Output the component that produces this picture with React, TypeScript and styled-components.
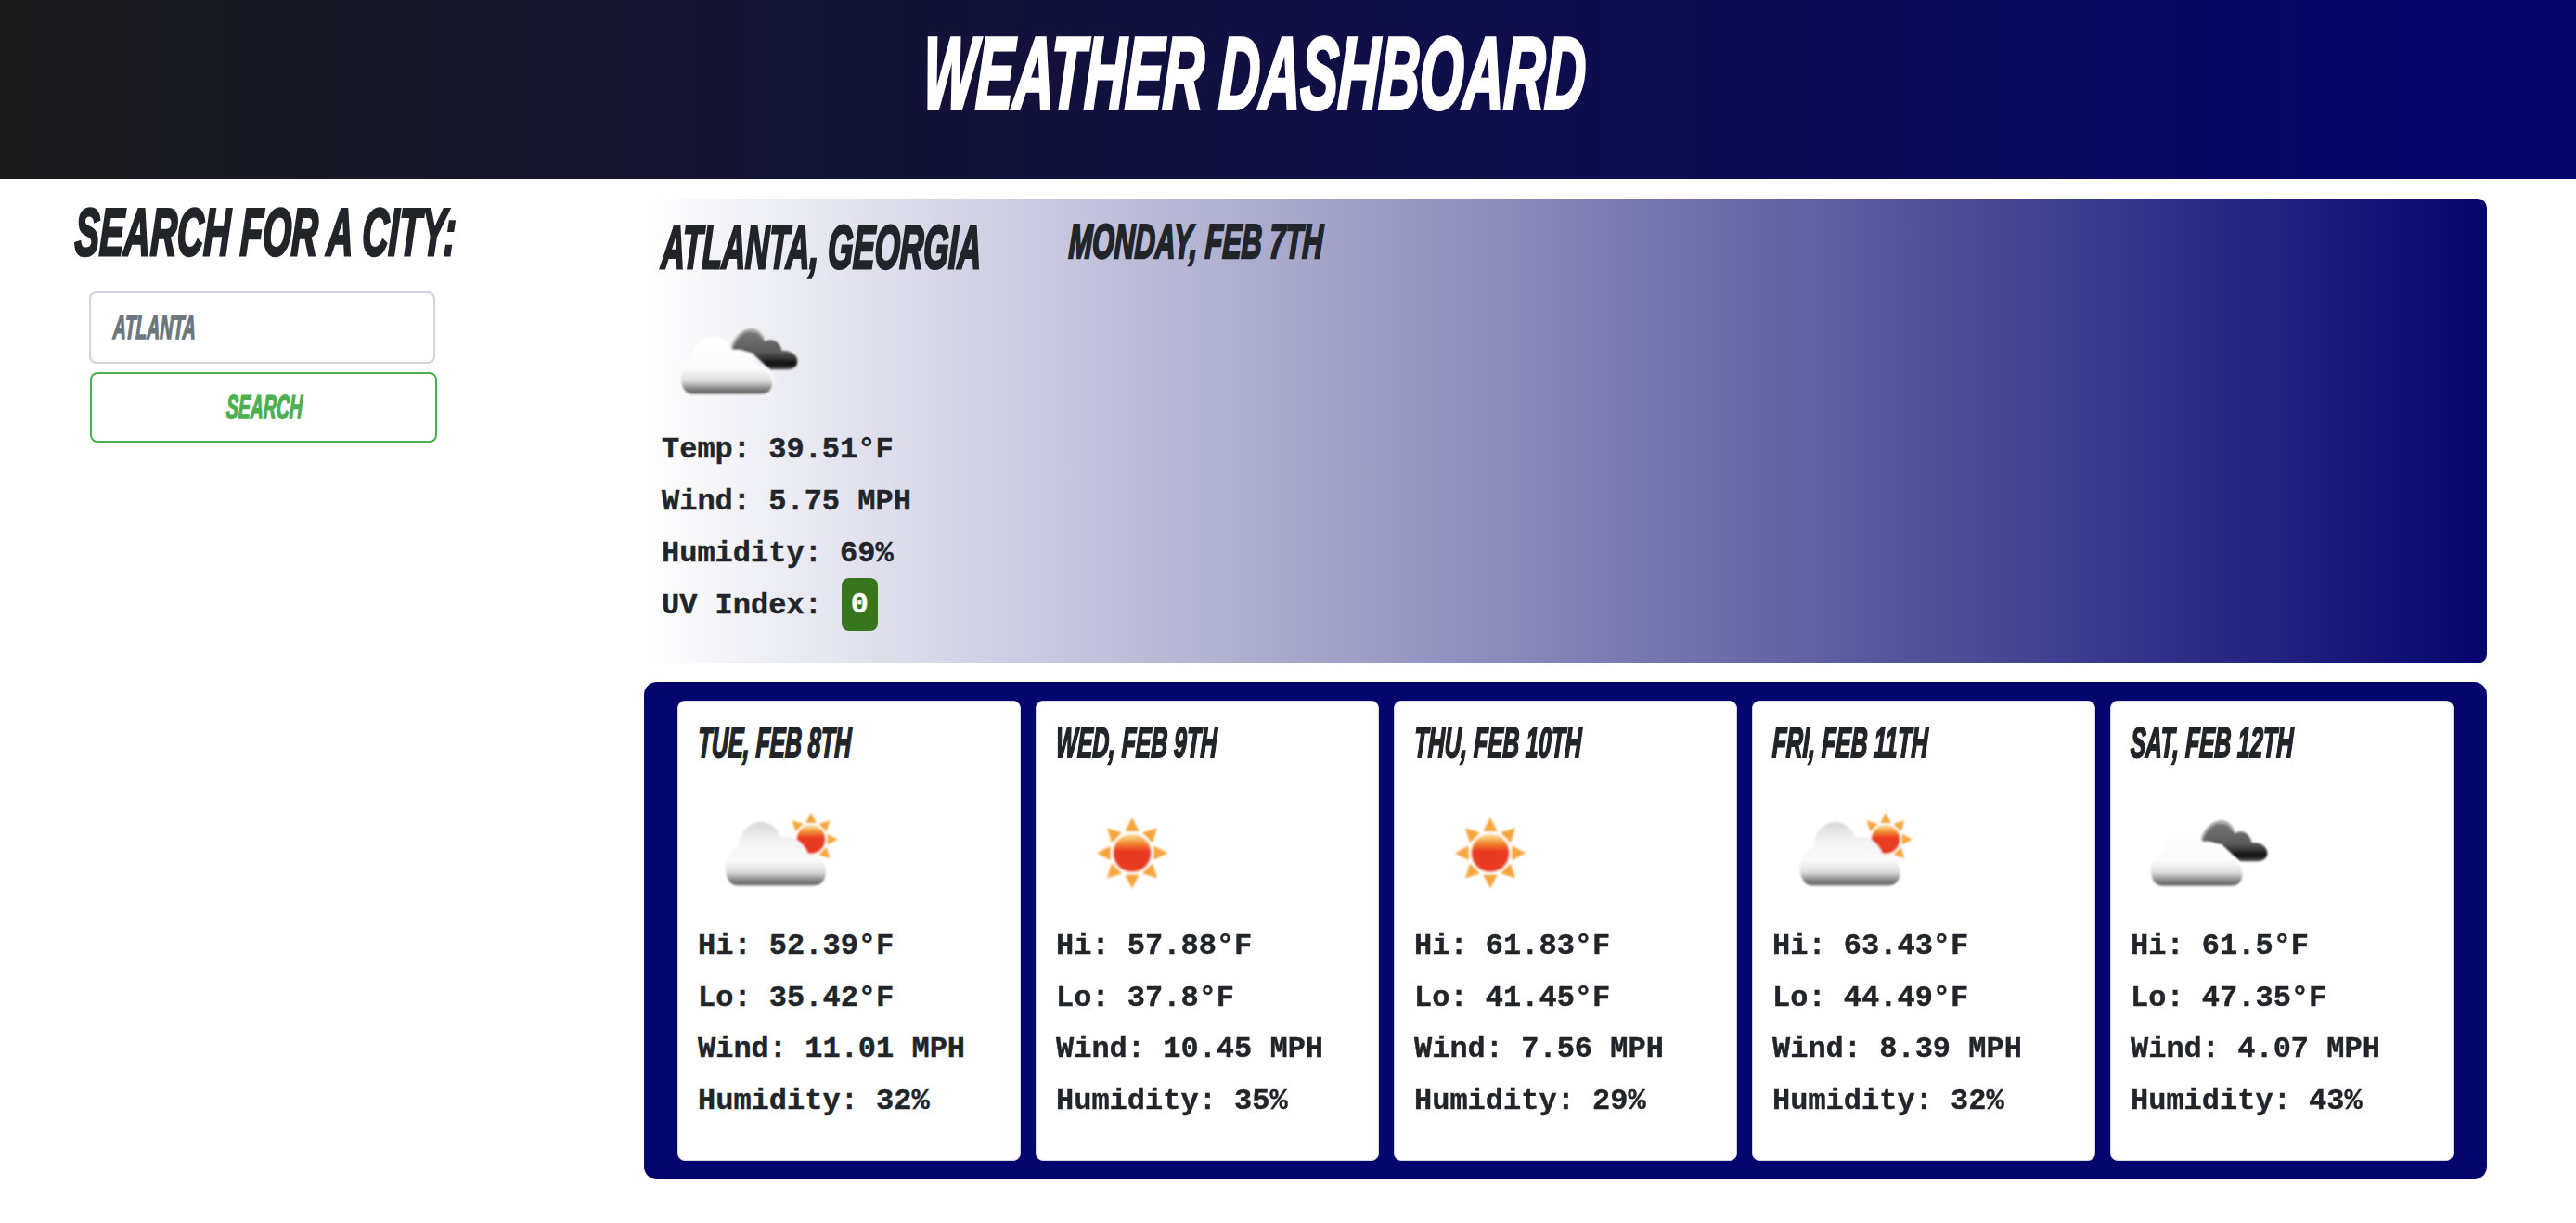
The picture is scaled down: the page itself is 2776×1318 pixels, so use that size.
import React, { FC } from "react";
import styled, { createGlobalStyle, css } from "styled-components";

const GlobalStyle = createGlobalStyle`
  html, body {
    margin: 0;
    padding: 0;
    background: #ffffff;
  }
`;

const bangers = css`
  font-family: "Liberation Sans Narrow", "Liberation Sans", sans-serif;
  font-weight: 700;
  font-style: italic;
  text-transform: uppercase;
  white-space: nowrap;
`;

const Page = styled("div")`
  width: 2776px;
  height: 1318px;
  overflow: hidden;
  color: #212529;
`;

const Header = styled("header")`
  height: 193px;
  background: linear-gradient(to right, #1a1a1a, #05056e);
  display: flex;
  justify-content: center;
  padding-top: 24px;
  box-sizing: border-box;
`;

// Bangers isn't installed, so a narrow bold gets squeezed down to its width
const Squeezed = styled("span")<{ $x: number; $stroke?: number }>`
  display: inline-block;
  transform: scaleX(${(p) => p.$x}) skewX(-4deg);
  transform-origin: left center;
  -webkit-text-stroke: ${(p) => p.$stroke ?? 1}px currentColor;
`;

const Title = styled("h1")`
  ${bangers}
  margin: 0;
  width: 786px;
  font-size: 110px;
  line-height: 110px;
  height: 110px;
  color: #ffffff;
`;

const Main = styled("main")`
  display: grid;
  grid-template-columns: 694px 1986px;
  padding-top: 21px;
`;

const Sidebar = styled("aside")`
  display: flex;
  flex-direction: column;
`;

const SearchTitle = styled("h2")`
  ${bangers}
  margin: 0 0 0 81px;
  height: 100px;
  font-size: 72px;
  line-height: 72px;
`;

const SearchInput = styled("div")`
  ${bangers}
  margin-left: 96px;
  width: 373px;
  height: 78px;
  box-sizing: border-box;
  border: 2px solid #ced4da;
  border-radius: 8px;
  padding-left: 24px;
  display: flex;
  align-items: center;
  font-size: 36px;
  color: #6c757d;
`;

const SearchButton = styled("button")`
  ${bangers}
  margin: 9px 0 0 97px;
  width: 374px;
  height: 76px;
  box-sizing: border-box;
  border: 2px solid #4caf50;
  border-radius: 8px;
  background: #ffffff;
  padding: 0 0 0 145px;
  text-align: left;
  font-size: 36px;
  color: #4caf50;
`;

const Content = styled("section")`
  display: flex;
  flex-direction: column;
  gap: 20px;
`;

const Hero = styled("div")`
  height: 501px;
  box-sizing: border-box;
  border-radius: 10px;
  padding: 20px 0 0 19px;
  background: linear-gradient(to right, #ffffff, #05056e);
`;

const HeroHead = styled("div")`
  display: flex;
  height: 96px;
`;

const City = styled("h2")`
  ${bangers}
  margin: 0;
  width: 439px;
  font-size: 66px;
  line-height: 64px;
`;

const Today = styled("h3")`
  ${bangers}
  margin: 0;
  font-size: 52px;
  line-height: 52px;
`;

const IconBox = styled("svg")<{ $left: number }>`
  display: block;
  width: 160px;
  height: 110px;
  margin-left: ${(p) => p.$left}px;
`;

const Stats = styled("div")<{ $top: number; $pitch: number }>`
  margin-top: ${(p) => p.$top}px;
  font-family: "Liberation Mono", "Courier New", monospace;
  font-weight: 700;
  font-size: 32px;
  white-space: pre;
  -webkit-text-stroke: 0.4px currentColor;

  & > div {
    height: ${(p) => p.$pitch}px;
    line-height: ${(p) => p.$pitch}px;
  }
`;

const UvRow = styled("div")`
  display: flex;
  align-items: flex-start;
  margin-top: -2px;
`;

const UvLabel = styled("span")`
  padding-top: 2px;
`;

const UvBadge = styled("span")`
  margin-left: 21px;
  width: 39px;
  height: 57px;
  border-radius: 8px;
  background: #38761d;
  color: #ffffff;
  text-align: center;
  line-height: 57px;
`;

const Forecast = styled("div")`
  height: 536px;
  box-sizing: border-box;
  border-radius: 14px;
  padding: 20px 35px 0 36px;
  background: #05056e;
  display: grid;
  grid-template-columns: repeat(5, 370px);
  gap: 16px;
  align-items: start;
`;

const Card = styled("article")`
  height: 496px;
  box-sizing: border-box;
  background: #ffffff;
  border: 1px solid #d5d5dc;
  border-radius: 8px;
  padding: 19px 0 0 21px;
`;

const CardDate = styled("h4")`
  ${bangers}
  margin: 0 0 35px;
  height: 50px;
  font-size: 46px;
  line-height: 50px;
`;

const WHITE_CLOUD =
  "M75 272C50 268 38 245 40 215C42 190 60 175 78 170C82 130 110 105 145 105C175 105 195 125 205 145C235 140 265 150 285 190C320 190 338 215 335 240C332 262 315 272 295 272Z";

const RAYS = [0, 45, 90, 135, 180, 225, 270, 315];

const Gradients: FC = () => (
  <svg width="0" height="0" style={{ position: "absolute" }}>
    <defs>
      <linearGradient id="cloudFill" x1="0" y1="0" x2="0" y2="1">
        <stop offset="0" stopColor="#ffffff" />
        <stop offset="0.55" stopColor="#fbfbfb" />
        <stop offset="0.75" stopColor="#dddddd" />
        <stop offset="0.88" stopColor="#8a8a8a" />
        <stop offset="0.95" stopColor="#666666" />
        <stop offset="1" stopColor="#b5b5b5" />
      </linearGradient>
      <linearGradient id="cloudFillSun" x1="0" y1="0" x2="0" y2="1">
        <stop offset="0" stopColor="#d8d8d8" />
        <stop offset="0.3" stopColor="#f4f4f4" />
        <stop offset="0.6" stopColor="#fafafa" />
        <stop offset="0.78" stopColor="#dddddd" />
        <stop offset="0.9" stopColor="#8a8a8a" />
        <stop offset="0.96" stopColor="#666666" />
        <stop offset="1" stopColor="#c0c0c0" />
      </linearGradient>
      <linearGradient id="darkFill" x1="0" y1="0" x2="0" y2="1">
        <stop offset="0" stopColor="#777777" />
        <stop offset="0.55" stopColor="#5a5a5a" />
        <stop offset="0.85" stopColor="#0c0c0c" />
        <stop offset="1" stopColor="#555555" />
      </linearGradient>
      <linearGradient id="sunFill" x1="0" y1="0" x2="0" y2="1">
        <stop offset="0" stopColor="#fde3a0" />
        <stop offset="0.2" stopColor="#f59a3a" />
        <stop offset="0.45" stopColor="#e93a20" />
        <stop offset="1" stopColor="#e93a20" />
      </linearGradient>
      <filter id="soft" x="-10%" y="-10%" width="120%" height="120%">
        <feGaussianBlur stdDeviation="3" />
      </filter>
    </defs>
  </svg>
);

const Sun: FC<{ cx: number; cy: number; r: number; rays?: number[] }> = ({ cx, cy, r, rays = RAYS }) => (
  <g>
    {rays.map((deg) => (
      <polygon
        key={deg}
        points={`${cx - r * 0.38},${cy - r * 1.15} ${cx + r * 0.38},${cy - r * 1.15} ${cx},${cy - r * 1.88}`}
        fill="#f6a53c"
        transform={`rotate(${deg} ${cx} ${cy})`}
      />
    ))}
    <circle cx={cx} cy={cy} r={r + 3} fill="#fff3df" />
    <circle cx={cx} cy={cy} r={r} fill="url(#sunFill)" />
  </g>
);

const WeatherIcon: FC<{ kind: "sun" | "sunCloud" | "darkCloud"; left: number }> = ({ kind, left }) => (
  <IconBox $left={left} viewBox="0 0 480 330" aria-hidden="true">
    <g filter="url(#soft)">
      {kind === "sun" && <Sun cx={222} cy={178} r={61} />}
      {kind === "sunCloud" && (
        <>
          <Sun cx={342} cy={134} r={46} rays={[-45, 0, 45, 90, 135]} />
          <path
            d={WHITE_CLOUD}
            fill="url(#cloudFillSun)"
            transform="translate(21 -52) scale(1.1 1.24)"
          />
        </>
      )}
      {kind === "darkCloud" && (
        <>
          <path
            d="M205 140C215 95 250 72 285 85C300 92 310 105 313 115C335 100 362 115 368 145C395 140 420 160 418 180C416 198 400 206 380 205L330 205L270 150Z"
            fill="url(#darkFill)"
          />
          <path d="M204 142C214 104 240 76 272 76C288 78 300 90 308 104" fill="none" stroke="#a8a8a8" strokeWidth="8" />
          <path
            d={WHITE_CLOUD}
            fill="url(#cloudFill)"
            stroke="#ffffff"
            strokeWidth="5"
            transform="translate(-2 -18) scale(1.02 1.126)"
          />
        </>
      )}
    </g>
  </IconBox>
);

type Day = {
  date: string;
  kind: "sun" | "sunCloud" | "darkCloud";
  hi: string;
  lo: string;
  wind: string;
  humidity: string;
};

const days: Day[] = [
  { date: "Tue, Feb 8th", kind: "sunCloud", hi: "52.39", lo: "35.42", wind: "11.01", humidity: "32" },
  { date: "Wed, Feb 9th", kind: "sun", hi: "57.88", lo: "37.8", wind: "10.45", humidity: "35" },
  { date: "Thu, Feb 10th", kind: "sun", hi: "61.83", lo: "41.45", wind: "7.56", humidity: "29" },
  { date: "Fri, Feb 11th", kind: "sunCloud", hi: "63.43", lo: "44.49", wind: "8.39", humidity: "32" },
  { date: "Sat, Feb 12th", kind: "darkCloud", hi: "61.5", lo: "47.35", wind: "4.07", humidity: "43" },
];

const App: FC = () => {
  return (
    <Page>
      <GlobalStyle />
      <Gradients />
      <Header>
        <Title>
          <Squeezed $x={0.552} $stroke={4}>Weather Dashboard</Squeezed>
        </Title>
      </Header>
      <Main>
        <Sidebar>
          <SearchTitle>
            <Squeezed $x={0.55} $stroke={3}>Search for a city:</Squeezed>
          </SearchTitle>
          <SearchInput>
            <Squeezed $x={0.54} $stroke={1.5}>Atlanta</Squeezed>
          </SearchInput>
          <SearchButton>
            <Squeezed $x={0.54} $stroke={1.5}>Search</Squeezed>
          </SearchButton>
        </Sidebar>
        <Content>
          <Hero>
            <HeroHead>
              <City>
                <Squeezed $x={0.53} $stroke={3}>Atlanta, Georgia</Squeezed>
              </City>
              <Today>
                <Squeezed $x={0.585} $stroke={2.5}>Monday, Feb 7th</Squeezed>
              </Today>
            </HeroHead>
            <WeatherIcon kind="darkCloud" left={7} />
            <Stats $top={17} $pitch={56}>
              <div>Temp: 39.51°F</div>
              <div>Wind: 5.75 MPH</div>
              <div>Humidity: 69%</div>
              <UvRow>
                <UvLabel>UV Index:</UvLabel>
                <UvBadge>0</UvBadge>
              </UvRow>
            </Stats>
          </Hero>
          <Forecast>
            {days.map((day) => (
              <Card key={day.date}>
                <CardDate>
                  <Squeezed $x={0.535} $stroke={2}>{day.date}</Squeezed>
                </CardDate>
                <WeatherIcon kind={day.kind} left={8} />
                <Stats $top={22} $pitch={55.5}>
                  <div>Hi: {day.hi}°F</div>
                  <div>Lo: {day.lo}°F</div>
                  <div>Wind: {day.wind} MPH</div>
                  <div>Humidity: {day.humidity}%</div>
                </Stats>
              </Card>
            ))}
          </Forecast>
        </Content>
      </Main>
    </Page>
  );
};

export default App;
